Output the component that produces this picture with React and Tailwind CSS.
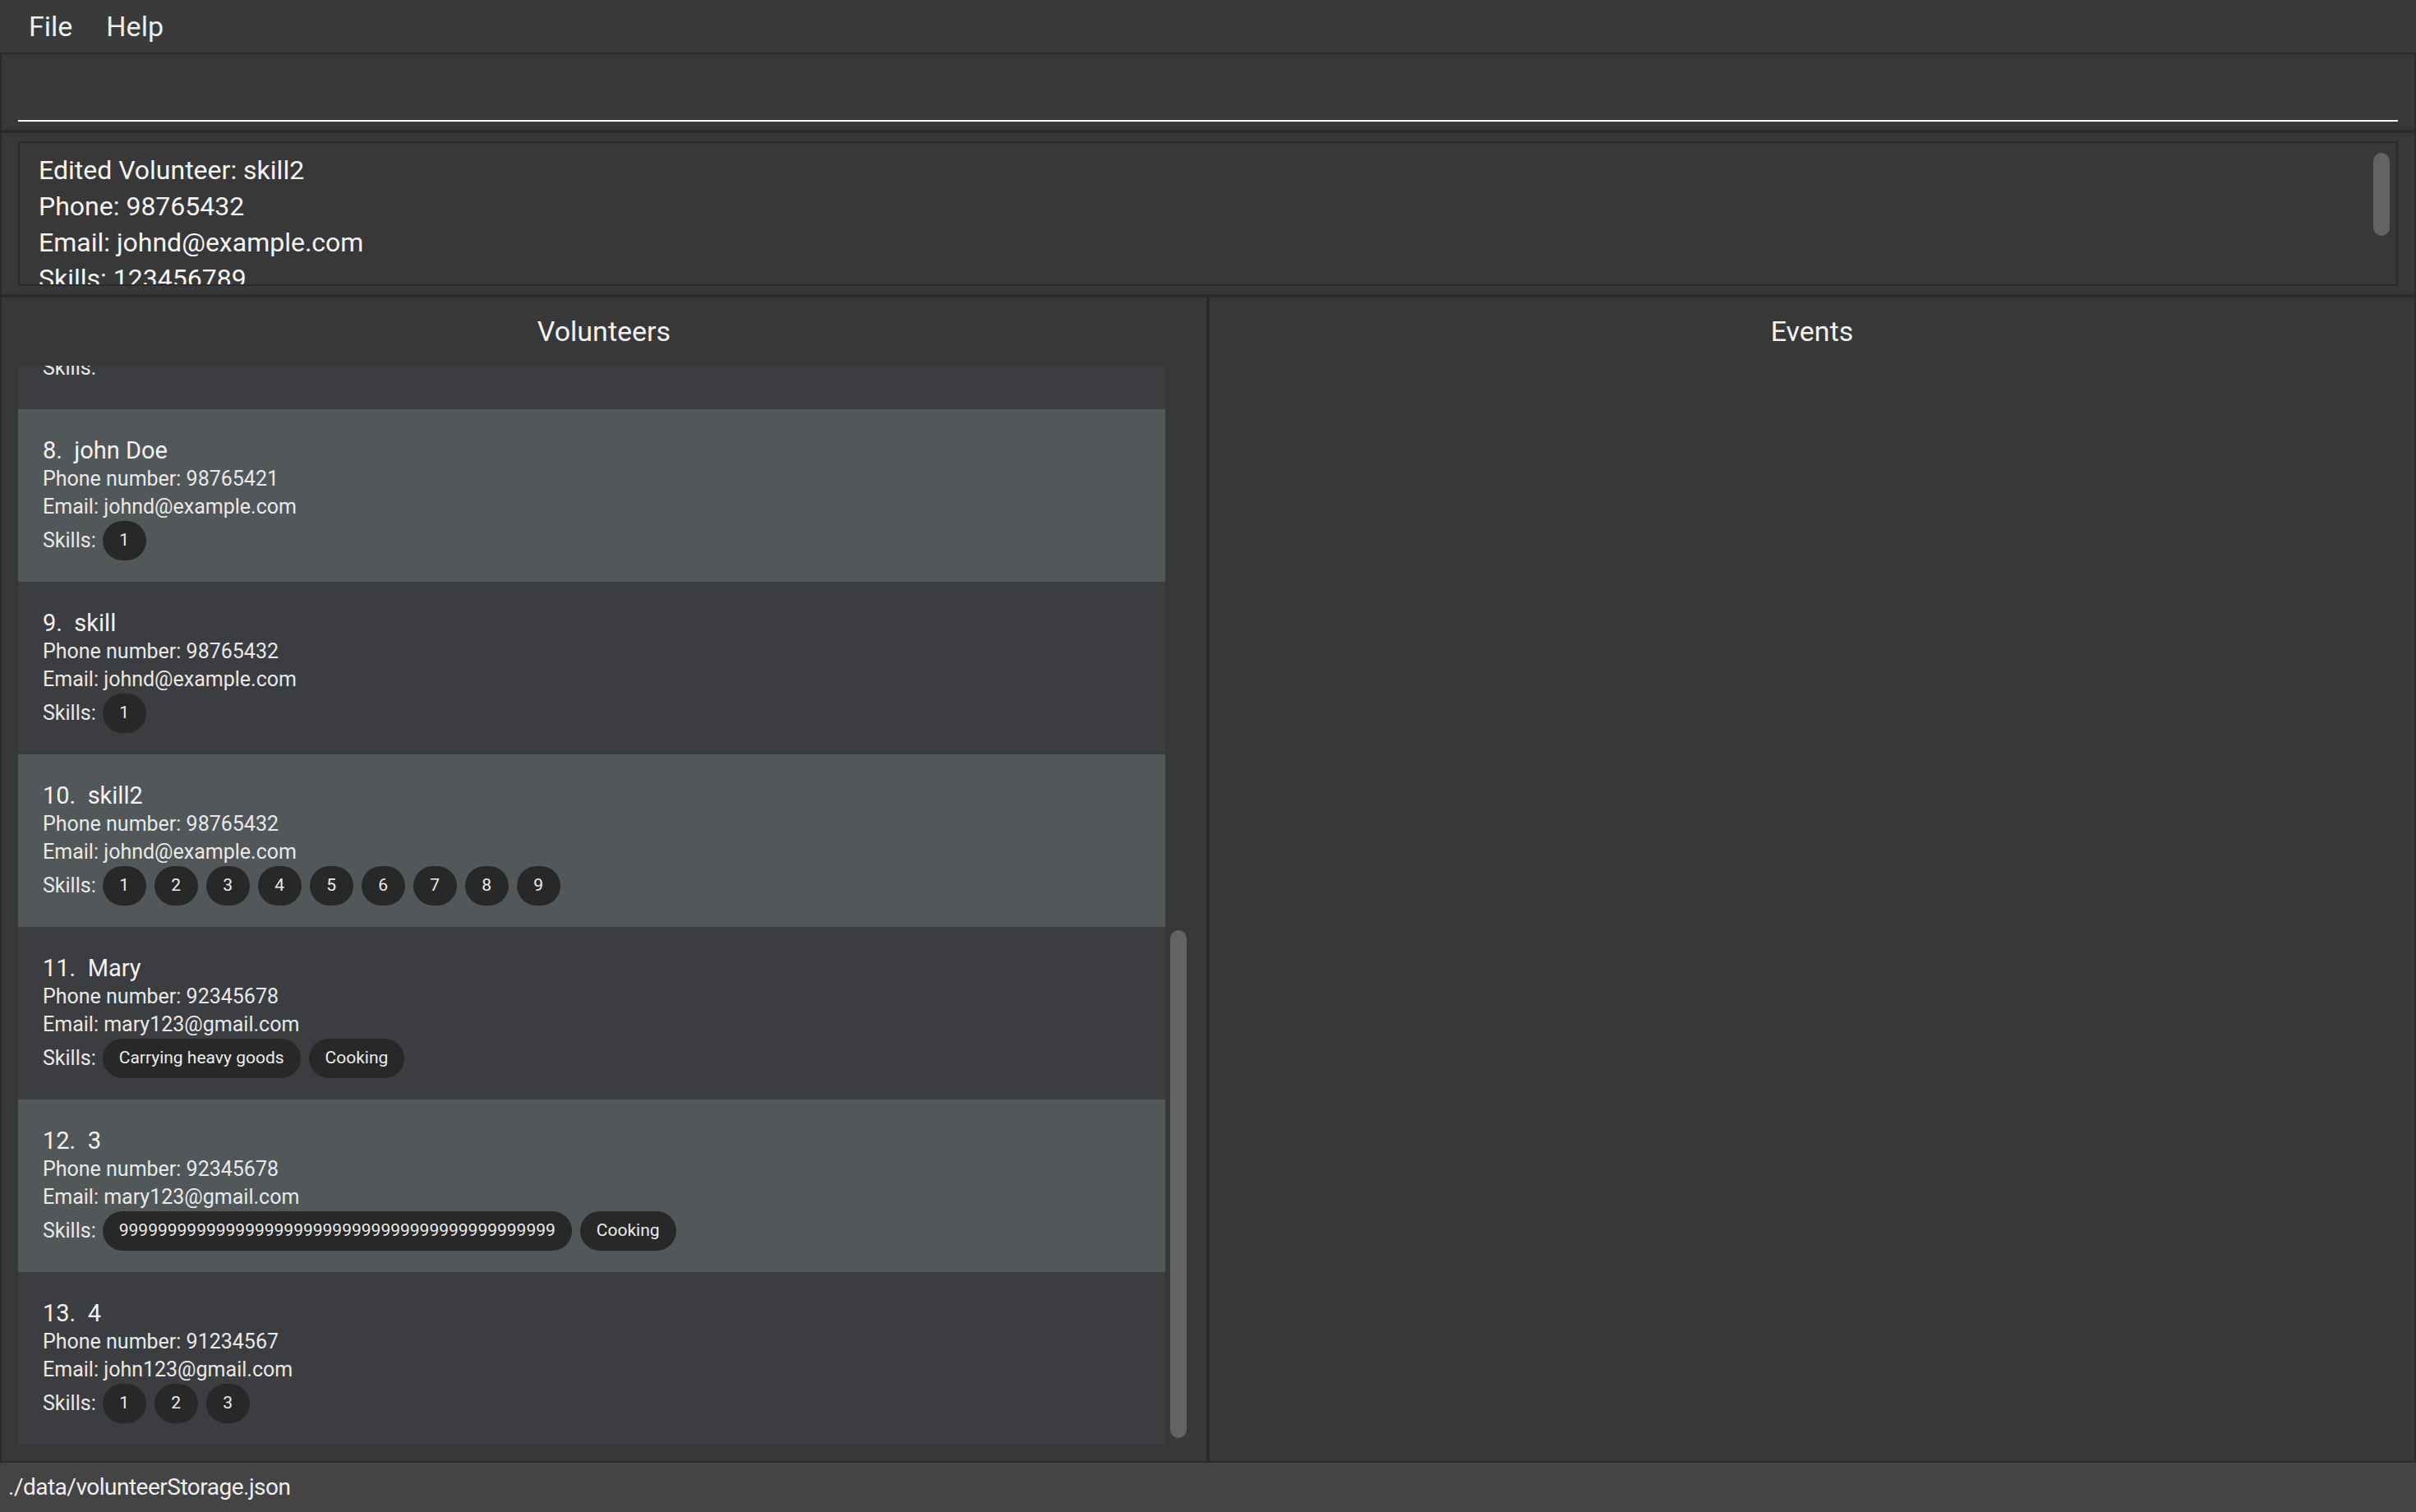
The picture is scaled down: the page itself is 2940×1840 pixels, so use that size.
import React from 'react';

const volunteers = [
  { id: 7, name: 'mary', phone: '91234567', email: 'mary@example.com', skills: [] },
  { id: 8, name: 'john Doe', phone: '98765421', email: 'johnd@example.com', skills: ['1'] },
  { id: 9, name: 'skill', phone: '98765432', email: 'johnd@example.com', skills: ['1'] },
  {
    id: 10,
    name: 'skill2',
    phone: '98765432',
    email: 'johnd@example.com',
    skills: ['1', '2', '3', '4', '5', '6', '7', '8', '9'],
  },
  { id: 11, name: 'Mary', phone: '92345678', email: 'mary123@gmail.com', skills: ['Carrying heavy goods', 'Cooking'] },
  { id: 12, name: '3', phone: '92345678', email: 'mary123@gmail.com', skills: ['9'.repeat(45), 'Cooking'] },
  { id: 13, name: '4', phone: '91234567', email: 'john123@gmail.com', skills: ['1', '2', '3'] },
];

function SkillChip({ label }) {
  return (
    <span className="flex h-[48px] min-w-[53px] items-center justify-center rounded-full bg-[#282828] px-[20px] text-[21px] text-[#ececec]">
      {label}
    </span>
  );
}

function VolunteerCard({ volunteer }) {
  const shade = volunteer.id % 2 === 0 ? 'bg-[#52575a]' : 'bg-[#3c3d40]';
  return (
    <div className={`h-[210px] shrink-0 pl-[30px] pt-[32px] ${shade}`}>
      <p className="whitespace-pre text-[29px] leading-[36px] text-[#f2f2f2]">
        {volunteer.id}.  {volunteer.name}
      </p>
      <p className="text-[25px] leading-[34px] text-[#e8e8e8]">Phone number: {volunteer.phone}</p>
      <p className="text-[25px] leading-[34px] text-[#e8e8e8]">Email: {volunteer.email}</p>
      <div className="flex h-[48px] items-center gap-[10px]">
        <span className="mr-[-2px] text-[25px] text-[#e8e8e8]">Skills:</span>
        {volunteer.skills.map((skill, i) => (
          <SkillChip key={i} label={skill} />
        ))}
      </div>
    </div>
  );
}

function PaneHeader({ title }) {
  return (
    <div className="flex h-[83px] shrink-0 items-center justify-center text-[34px] text-[#f2f2f2]">{title}</div>
  );
}

export default function App() {
  return (
    <div className="flex h-screen w-full flex-col overflow-hidden bg-[#383838] font-['Roboto',sans-serif] text-[#f2f2f2]">
      {/* menu bar */}
      <div className="flex h-[64px] shrink-0 items-center gap-[41px] bg-[#3a3a3a] pl-[35px] text-[34px] text-[#eeeeee]">
        <span>File</span>
        <span>Help</span>
      </div>
      <div className="h-[2px] shrink-0 bg-[#2b2b2b]" />

      {/* command box */}
      <div className="flex h-[92px] shrink-0 flex-col justify-end border-x-2 border-[#2b2b2b] px-[20px] pb-[10px]">
        <div className="h-[40px] border-b-2 border-white" />
      </div>
      <div className="h-[4px] shrink-0 bg-[#2b2b2b]" />

      {/* result display */}
      <div className="h-[196px] shrink-0 border-x-2 border-[#2b2b2b] px-[20px] py-[10px]">
        <div className="relative h-full overflow-hidden border-2 border-[#2b2b2b] pl-[23px] pt-[11px] text-[32px] leading-[44px] text-[#f4f4f4]">
          <p>Edited Volunteer: skill2</p>
          <p>Phone: 98765432</p>
          <p>Email: johnd@example.com</p>
          <p>Skills: 123456789</p>
          <p>Events: </p>
          <div className="absolute right-[8px] top-[12px] h-[101px] w-[20px] rounded-[10px] bg-[#636363]" />
        </div>
      </div>
      <div className="h-[4px] shrink-0 bg-[#2b2b2b]" />

      {/* split panes */}
      <div className="flex min-h-0 flex-1">
        <div className="flex w-[1468px] shrink-0 flex-col border-l-2 border-[#2b2b2b]">
          <PaneHeader title="Volunteers" />
          <div className="flex min-h-0 flex-1 gap-[6px] pb-[20px] pl-[20px] pr-[24px]">
            <div className="min-w-0 flex-1 overflow-hidden">
              <div className="-mt-[157px] flex flex-col">
                {volunteers.map((v) => (
                  <VolunteerCard key={v.id} volunteer={v} />
                ))}
              </div>
            </div>
            <div className="flex w-[20px] flex-col justify-end pb-[8px]">
              <div className="h-[618px] rounded-[10px] bg-[#636363]" />
            </div>
          </div>
        </div>
        <div className="w-[4px] shrink-0 bg-[#2b2b2b]" />
        <div className="flex flex-1 flex-col border-r-2 border-[#2b2b2b]">
          <PaneHeader title="Events" />
        </div>
      </div>
      <div className="h-[2px] shrink-0 bg-[#2b2b2b]" />

      {/* status bar */}
      <div className="flex h-[60px] shrink-0 items-center bg-[#444444] pl-[10px] text-[28px] tracking-[-0.5px] text-[#eeeeee]">
        ./data/volunteerStorage.json
      </div>
    </div>
  );
}
